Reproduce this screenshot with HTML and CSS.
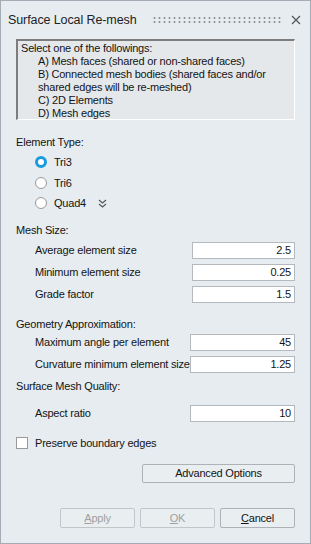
FILE: index.html
```html
<!DOCTYPE html>
<html lang="en">
<head>
    <meta charset="UTF-8">
    <title>Surface Local Re-mesh</title>
    <link rel="stylesheet" href="styles.css">
</head>
<body>
    <div class="window">
        <div class="titlebar">
            <span class="title">Surface Local Re-mesh</span>
            <span class="grip"></span>
            <svg class="close" width="10" height="10" viewBox="0 0 10 10">
                <path d="M1 1 L9 9 M9 1 L1 9" stroke="#555" stroke-width="1.2" fill="none"/>
            </svg>
        </div>

        <div class="infobox">
            <div>Select one of the followings:</div>
            <div class="indent">A) Mesh faces (shared or non-shared faces)</div>
            <div class="indent">B) Connected mesh bodies (shared faces and/or</div>
            <div class="indent">shared edges will be re-meshed)</div>
            <div class="indent">C) 2D Elements</div>
            <div class="indent">D) Mesh edges</div>
        </div>

        <div class="section-label first">Element Type:</div>
        <div class="radios">
            <label class="radio-row"><span class="radio checked"></span>Tri3</label>
            <label class="radio-row"><span class="radio"></span>Tri6</label>
            <label class="radio-row"><span class="radio"></span>Quad4
                <svg class="chevron" width="9" height="9" viewBox="0 0 9 9">
                    <path d="M1 1 L4.5 4 L8 1 M1 5 L4.5 8 L8 5" stroke="#555" stroke-width="1.1" fill="none"/>
                </svg>
            </label>
        </div>

        <div class="section-label mesh">Mesh Size:</div>
        <div class="field">
            <span class="field-label">Average element size</span>
            <span class="input">2.5</span>
        </div>
        <div class="field">
            <span class="field-label">Minimum element size</span>
            <span class="input">0.25</span>
        </div>
        <div class="field">
            <span class="field-label">Grade factor</span>
            <span class="input">1.5</span>
        </div>

        <div class="section-label geo">Geometry Approximation:</div>
        <div class="field wide">
            <span class="field-label">Maximum angle per element</span>
            <span class="input">45</span>
        </div>
        <div class="field wide">
            <span class="field-label">Curvature minimum element size</span>
            <span class="input">1.25</span>
        </div>

        <div class="section-label quality">Surface Mesh Quality:</div>
        <div class="field wide aspect">
            <span class="field-label">Aspect ratio</span>
            <span class="input">10</span>
        </div>

        <label class="check-row"><span class="checkbox"></span>Preserve boundary edges</label>

        <div class="advanced-row">
            <button class="btn advanced">Advanced Options</button>
        </div>

        <div class="footer">
            <button class="btn disabled"><u>A</u>pply</button>
            <button class="btn disabled"><u>O</u>K</button>
            <button class="btn"><u>C</u>ancel</button>
        </div>
    </div>
</body>
</html>
```

FILE: styles.css
```css
body {
    margin: 0;
    font-family: "Liberation Sans", Arial, sans-serif;
    font-size: 11px;
    letter-spacing: -0.2px;
    color: #141414;
    background-color: #e6ecf0;
}

.window {
    width: 311px;
    height: 544px;
    box-sizing: border-box;
    border: 1px solid #a4adb5;
    background-color: #e6ecf0;
    padding: 0 15px 0 15px;
}

.titlebar {
    display: flex;
    align-items: center;
    height: 37px;
    margin-left: -8px;
}

.title {
    font-size: 12.5px;
    letter-spacing: -0.1px;
    color: #222;
}

.grip {
    flex: 1;
    height: 8px;
    margin: 0 10px 0 15px;
    background-image: radial-gradient(circle, #8a8f94 0.9px, transparent 1.2px);
    background-size: 5px 4px;
}

.close {
    margin-right: -6px;
}

.infobox {
    margin-top: 1px;
    height: 81px;
    box-sizing: border-box;
    border-top: 2px solid #7d7d7d;
    border-left: 2px solid #7d7d7d;
    border-right: 1px solid #ffffff;
    border-bottom: 1px solid #ffffff;
    padding: 1px 0 0 3px;
    line-height: 13px;
    background-color: #e4e8eb;
    white-space: nowrap;
}

.indent {
    padding-left: 17px;
}

.section-label {
    height: 20px;
    line-height: 20px;
    margin-top: 12px;
}

.radios {
    padding-left: 19px;
}

.radio-row {
    display: flex;
    align-items: center;
    height: 20.5px;
}

.radio {
    width: 12px;
    height: 12px;
    box-sizing: border-box;
    border: 1px solid #999;
    border-radius: 50%;
    background: #fff;
    margin-right: 7px;
}

.radio.checked {
    border: 3.5px solid #1a9be0;
}

.chevron {
    margin-left: 12px;
}

.section-label.mesh {
    margin-top: 6px;
    margin-bottom: 2px;
}

.field {
    display: flex;
    align-items: center;
    justify-content: space-between;
    height: 17px;
    margin-top: 5px;
    padding-left: 19px;
    white-space: nowrap;
}

.section-label + .field {
    margin-top: 0;
}

.input {
    width: 103px;
    height: 17px;
    box-sizing: border-box;
    border: 1px solid #b4b9bd;
    background: #fff;
    text-align: right;
    padding-right: 3px;
    line-height: 15px;
}

.field.wide .input {
    width: 105px;
}

.section-label.geo {
    margin-top: 11px;
}

.section-label.quality {
    margin-top: 3px;
}

.field.aspect {
    margin-top: 9px;
}

.check-row {
    display: flex;
    align-items: center;
    height: 12px;
    margin-top: 15px;
}

.checkbox {
    width: 12px;
    height: 12px;
    box-sizing: border-box;
    border: 1px solid #999;
    background: #fff;
    margin-right: 7px;
}

.advanced-row {
    display: flex;
    justify-content: flex-end;
    margin-top: 15px;
}

.btn {
    font-family: "Liberation Sans", Arial, sans-serif;
    font-size: 11px;
    letter-spacing: -0.2px;
    color: #141414;
    background: #e9eef1;
    border: 1px solid #adb2b6;
    border-radius: 2px;
    height: 20px;
    padding: 0;
}

.btn.advanced {
    width: 153px;
    height: 19px;
}

.footer {
    display: flex;
    justify-content: flex-end;
    gap: 5px;
    margin-top: 25px;
}

.footer .btn {
    width: 75px;
}

.btn.disabled {
    color: #a0a0a0;
    border-color: #c2c6ca;
}
```
